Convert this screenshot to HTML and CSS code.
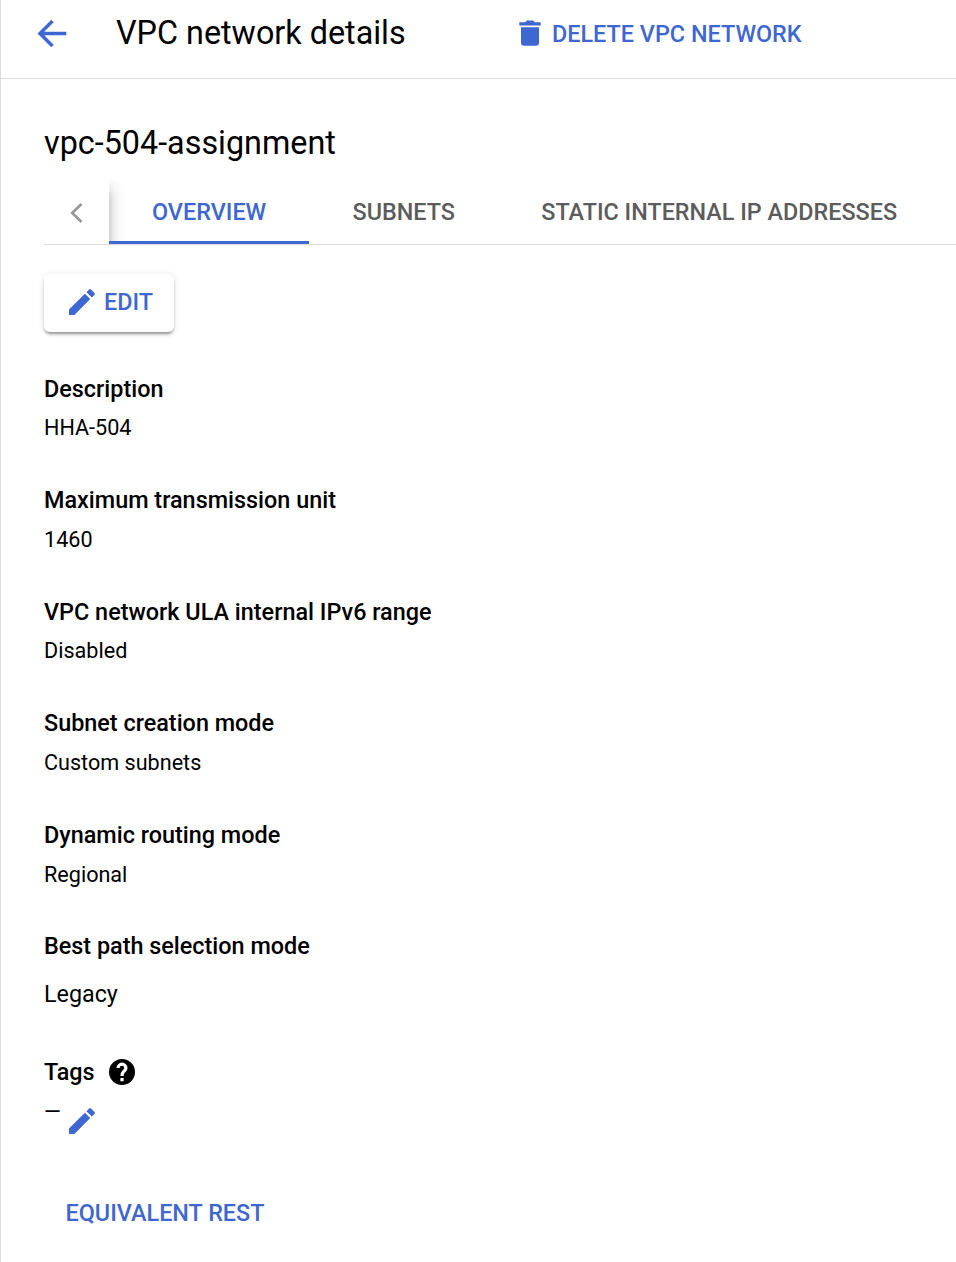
FILE: index.html
```html
<!DOCTYPE html>
<html lang="en">
<head>
<meta charset="utf-8">
<title>VPC network details</title>
<link rel="stylesheet" href="styles.css">
</head>
<body>
<div class="page">
  <header class="topbar">
    <svg class="back" viewBox="0 0 30 30"><path d="M29.300 14.500H3M15.500 2L3 14.500 15.500 27" fill="none" stroke="currentColor" stroke-width="3.500"/></svg>
    <h1 class="title"><span>VPC network details</span></h1>
    <button class="delete"><svg class="trash" viewBox="0 0 22 26"><path d="M0.300 2.200h5.900L7.800.5h6.400l1.600 1.700h5.900v3.300H.3zM2 7.200h18v15.500a3 3 0 0 1-3 3H5a3 3 0 0 1-3-3z" fill="currentColor"/></svg><span>DELETE VPC NETWORK</span></button>
  </header>
  <main class="content">
    <h2 class="name"><span>vpc-504-assignment</span></h2>
    <nav class="tabs">
      <div class="prev"><svg class="chevron" viewBox="0 0 13 20"><path d="M11.500 1L2.200 10l9.300 9" fill="none" stroke="currentColor" stroke-width="2.700"/></svg></div>
      <div class="tab active"><span>OVERVIEW</span></div>
      <div class="tab subnets"><span>SUBNETS</span></div>
      <div class="tab static"><span>STATIC INTERNAL IP ADDRESSES</span></div>
    </nav>
    <button class="edit"><svg class="pencil" viewBox="3 2.900 18.100 18.100"><path d="M3 17.250V21h3.750L17.810 9.940l-3.750-3.750L3 17.250zM20.710 7.040a1 1 0 0 0 0-1.410l-2.340-2.340a1 1 0 0 0-1.410 0l-1.830 1.830 3.750 3.750 1.830-1.830z" fill="currentColor"/></svg><span>EDIT</span></button>
    <dl class="details">
      <div class="item"><dt>Description</dt><dd>HHA-504</dd></div>
      <div class="item"><dt>Maximum transmission unit</dt><dd>1460</dd></div>
      <div class="item"><dt>VPC network ULA internal IPv6 range</dt><dd>Disabled</dd></div>
      <div class="item"><dt>Subnet creation mode</dt><dd>Custom subnets</dd></div>
      <div class="item"><dt>Dynamic routing mode</dt><dd>Regional</dd></div>
      <div class="item path"><dt>Best path selection mode</dt><dd>Legacy</dd></div>
      <div class="item tags"><dt>Tags <svg class="help" viewBox="2 2 20 20"><circle cx="12" cy="12" r="10"/><path class="mark" d="M9 9c0-1.650 1.350-3 3-3s3 1.350 3 3c0 .65-.25 1.200-.65 1.600l-1.100 1.100C12.400 12.500 12 13.200 12 15M12 16.700v2.500"/></svg></dt><dd><span>—</span><svg class="pencil" viewBox="3 2.900 18.100 18.100"><path d="M3 17.250V21h3.750L17.810 9.940l-3.750-3.750L3 17.250zM20.710 7.040a1 1 0 0 0 0-1.410l-2.340-2.340a1 1 0 0 0-1.410 0l-1.830 1.830 3.750 3.750 1.830-1.830z" fill="currentColor"/></svg></dd></div>
    </dl>
    <button class="rest">EQUIVALENT REST</button>
  </main>
</div>
</body>
</html>
```
FILE: styles.css
```css
* { box-sizing: border-box; }
body { margin: 0; background: #fff; color: #000; font-family: Roboto, sans-serif; overflow: hidden; }
h1, h2, dl, dd { margin: 0; font-weight: 400; }
svg { display: block; flex: none; }
button { border: 0; padding: 0; background: none; font: 500 23.400px/28px Roboto, sans-serif; color: #3f67d2; }
.page { height: 1262px; border-left: 1px solid #dcdcdc; }
.topbar { height: 79px; border-bottom: 1px solid #dcdcdc; display: flex; align-items: flex-start; padding-left: 36px; }
.back { width: 30px; height: 30px; margin-top: 19px; color: #3f67d2; }
.title { width: 403px; margin-left: 49px; padding-top: 13px; font-size: 32.350px; line-height: 40px; white-space: nowrap; }
.delete { display: flex; align-items: flex-start; gap: 11px; margin-top: 20px; white-space: nowrap; }
.trash { width: 22px; height: 26px; }
.content { padding-left: 43px; }
.name { padding-top: 44px; font-size: 32.350px; line-height: 40px; }
.tabs { display: flex; height: 66px; margin-top: 16px; border-bottom: 1px solid #dcdcdc; overflow: hidden; }
.prev { width: 65px; flex: none; padding: 23.500px 0 0 26px; color: #999; }
.chevron { width: 13px; height: 20px; }
.tab { flex: none; font-size: 23.400px; font-weight: 500; line-height: 28px; padding-top: 19px; color: #5c5c5c; white-space: nowrap; }
.active { width: 200px; padding-left: 43px; color: #3f67d2; border-bottom: 3px solid #3f67d2; background: linear-gradient(#fff, rgba(255,255,255,0) 20px), linear-gradient(90deg, #d2d2d2, #ededed 5px, #fafafa 11px, #fff 18px); }
.subnets { padding-left: 43.500px; width: 189px; }
.static { padding-left: 43.300px; font-size: 23.370px; }
.edit { display: flex; align-items: center; gap: 9px; width: 130px; height: 58px; margin-top: 29px; padding: 0 0 2px 25px; border-radius: 6px; box-shadow: 0 3px 3px -1px rgba(0,0,0,.38), 0 1px 7px rgba(0,0,0,.13); }
.edit span { padding-bottom: 1px; }
.pencil { width: 26px; height: 26px; color: #3f67d2; }
.details { padding-top: 43.500px; }
.item { height: 111.550px; }
.item dt { display: flex; align-items: flex-start; height: 28px; font-size: 23.400px; font-weight: 500; line-height: 26px; }
.item dd { font-size: 21.600px; line-height: 28px; margin-top: 10.850px; }
.path { height: 125.750px; }
.path dd { font-size: 23.300px; margin-top: 19px; }
.help { width: 26px; height: 26px; margin-left: 14.500px; }
.mark { fill: none; stroke: #fff; stroke-width: 2.500; }
.tags dd { display: flex; gap: 8px; }
.tags .pencil { margin-top: 10px; }
.rest { margin: 28.500px 0 0 21.500px; }
```
